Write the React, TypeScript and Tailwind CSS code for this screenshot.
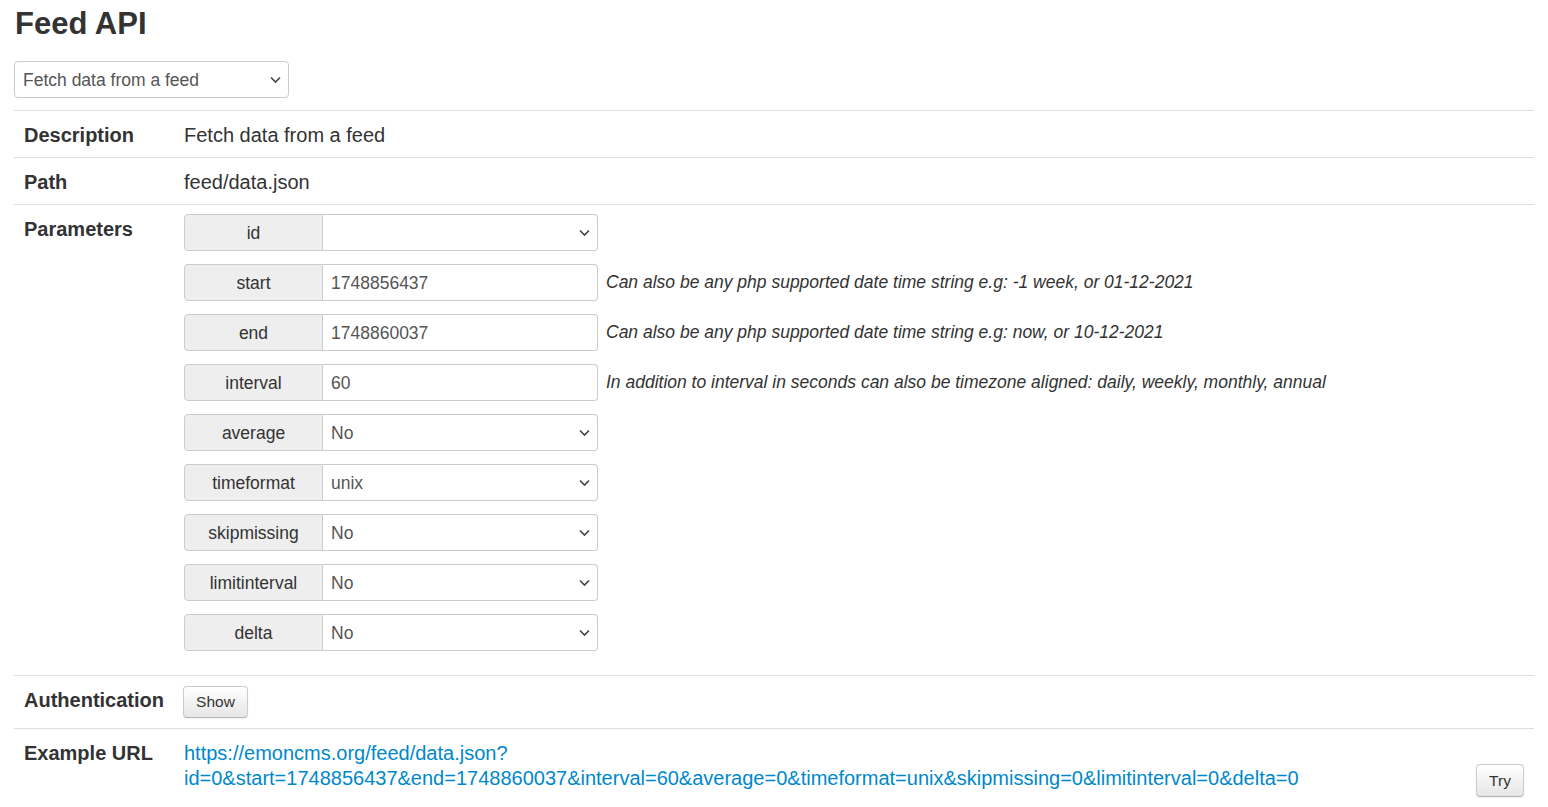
import React from 'react'

type Param = {
  name: string
  kind: 'select' | 'text'
  value: string
  help?: string
}

const params: Param[] = [
  { name: 'id', kind: 'select', value: '' },
  {
    name: 'start',
    kind: 'text',
    value: '1748856437',
    help: 'Can also be any php supported date time string e.g: -1 week, or 01-12-2021',
  },
  {
    name: 'end',
    kind: 'text',
    value: '1748860037',
    help: 'Can also be any php supported date time string e.g: now, or 10-12-2021',
  },
  {
    name: 'interval',
    kind: 'text',
    value: '60',
    help: 'In addition to interval in seconds can also be timezone aligned: daily, weekly, monthly, annual',
  },
  { name: 'average', kind: 'select', value: 'No' },
  { name: 'timeformat', kind: 'select', value: 'unix' },
  { name: 'skipmissing', kind: 'select', value: 'No' },
  { name: 'limitinterval', kind: 'select', value: 'No' },
  { name: 'delta', kind: 'select', value: 'No' },
]

const Chevron = () => (
  <svg
    className="pointer-events-none absolute right-[7px] top-1/2 -translate-y-1/2"
    width="11"
    height="7"
    viewBox="0 0 11 7"
    fill="none"
  >
    <path d="M1 1l4.5 4.5L10 1" stroke="#444" strokeWidth="1.6" />
  </svg>
)

const Row = ({ label, children }: { label: string; children: React.ReactNode }) => (
  <div className="flex border-t border-[#ddd]">
    <div className="w-[160px] shrink-0 px-[10px] pb-[9px] pt-[12px] text-[20px] font-bold leading-[25px]">
      {label}
    </div>
    <div className="flex-1 px-[10px] pb-[9px] pt-[12px] text-[20px] leading-[25px]">{children}</div>
  </div>
)

const Button = ({ label, className }: { label: string; className: string }) => (
  <button
    className={`rounded-[4px] border border-[#ccc] border-b-[#b3b3b3] bg-gradient-to-b from-white to-[#e6e6e6] text-[15.5px] leading-none text-[#333] shadow-[inset_0_1px_0_rgba(255,255,255,0.2),0_1px_2px_rgba(0,0,0,0.05)] ${className}`}
  >
    {label}
  </button>
)

const ParamRow = ({ p }: { p: Param }) => (
  <div className="mb-[13px] flex items-center">
    <div className="flex h-[37px] w-[414px] shrink-0">
      <div className="flex w-[139px] items-center justify-center rounded-l-[4px] border border-[#ccc] bg-[#eee] pt-[1px] text-[17.5px] text-[#333]">
        {p.name}
      </div>
      <div className="relative flex flex-1 items-center rounded-r-[4px] border border-l-0 border-[#ccc] bg-white pl-[8px] pt-[1px] text-[17.5px] text-[#555]">
        {p.value}
        {p.kind === 'select' && <Chevron />}
      </div>
    </div>
    {p.help && (
      <div className="mb-[2px] ml-[8px] text-[17.5px] italic leading-[26px] text-[#333]">{p.help}</div>
    )}
  </div>
)

export default function App() {
  return (
    <div className="min-h-screen bg-white px-[14px] font-['Liberation_Sans',Arial,sans-serif] text-[#333]">
      <h1 className="pl-[1px] pt-[1px] text-[31px] font-bold leading-[46px] text-[#333]">Feed API</h1>

      <div className="relative mt-[14px] flex h-[37px] w-[275px] items-center rounded-[4px] border border-[#ccc] bg-white pl-[8px] pt-[1px] text-[17.5px] text-[#555]">
        Fetch data from a feed
        <Chevron />
      </div>

      <div className="mt-[12px]">
        <Row label="Description">Fetch data from a feed</Row>
        <Row label="Path">feed/data.json</Row>
        <Row label="Parameters">
          <div className="-mt-[3px] pb-[2px]">
            {params.map((p) => (
              <ParamRow key={p.name} p={p} />
            ))}
          </div>
        </Row>
        <Row label="Authentication">
          <div className="-mt-[2px] mb-[1px] flex">
            <Button label="Show" className="-ml-px h-[32px] w-[65px]" />
          </div>
        </Row>
        <Row label="Example URL">
          <div className="flex justify-between">
            <a className="text-[20px] leading-[25px] text-[#0088cc]" href="#">
              https://emoncms.org/feed/data.json?
              <br />
              id=0&amp;start=1748856437&amp;end=1748860037&amp;interval=60&amp;average=0&amp;timeformat=unix&amp;skipmissing=0&amp;limitinterval=0&amp;delta=0
            </a>
            <Button label="Try" className="mt-[23px] h-[33px] w-[48px] shrink-0" />
          </div>
        </Row>
      </div>
    </div>
  )
}
